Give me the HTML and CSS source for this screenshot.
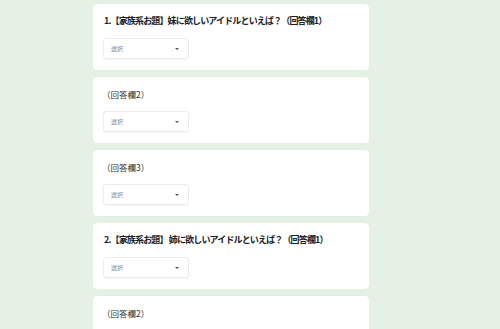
FILE: index.html
```html
<!DOCTYPE html>
<html lang="ja">
<head>
  <meta charset="UTF-8" />
  <meta name="viewport" content="width=device-width, initial-scale=1" />
  <title>アンケート</title>
  <link rel="stylesheet" href="styles.css">
</head>
<body>
  <div class="form-wrap">
    <div class="card">
      <div class="q-title">1.【家族系お題】妹に欲しいアイドルといえば？（回答欄1）</div>
      <div class="select"><span>選択</span><i class="caret"></i></div>
    </div>
    <div class="card">
      <div class="q-label">（回答欄2）</div>
      <div class="select"><span>選択</span><i class="caret"></i></div>
    </div>
    <div class="card">
      <div class="q-label">（回答欄3）</div>
      <div class="select"><span>選択</span><i class="caret"></i></div>
    </div>
    <div class="card">
      <div class="q-title">2.【家族系お題】 姉に欲しいアイドルといえば？（回答欄1）</div>
      <div class="select"><span>選択</span><i class="caret"></i></div>
    </div>
    <div class="card">
      <div class="q-label">（回答欄2）</div>
      <div class="select"><span>選択</span><i class="caret"></i></div>
    </div>
  </div>
</body>
</html>
```

FILE: styles.css
```css
*, *::before, *::after { box-sizing: border-box; }
body {
  margin: 0;
  background: #e4f1e4;
  font-family: "Noto Sans CJK JP", "Noto Sans", sans-serif;
  color: #202124;
  overflow: hidden;
}
.form-wrap {
  width: 276px;
  margin: 4px 0 0 93px;
  display: flex;
  flex-direction: column;
  gap: 7px;
}
.card {
  background: #fff;
  border-radius: 4px;
  height: 66px;
  padding: 12px 10px 0 10px;
  box-shadow: 0 0 1px rgba(0,0,0,0.08);
}
.q-title {
  font-size: 9px;
  font-weight: 700;
  line-height: 10px;
  height: 10px;
  white-space: nowrap;
  letter-spacing: -0.85px;
  margin-left: 1px;
}
.q-label {
  font-size: 8.5px;
  line-height: 10px;
  height: 10px;
  color: #333;
  margin-left: -1px;
}
.select {
  margin-top: 12px;
  width: 86px;
  height: 21px;
  border: 1px solid #ececec;
  border-radius: 3px;
  box-shadow: 0 1px 1px rgba(0,0,0,0.04);
  display: flex;
  align-items: center;
  justify-content: space-between;
  padding: 0 9px 0 7px;
  font-size: 6px;
  color: #888;
}
.caret {
  width: 0;
  height: 0;
  border-left: 2.5px solid transparent;
  border-right: 2.5px solid transparent;
  border-top: 2.5px solid #555;
}
```
